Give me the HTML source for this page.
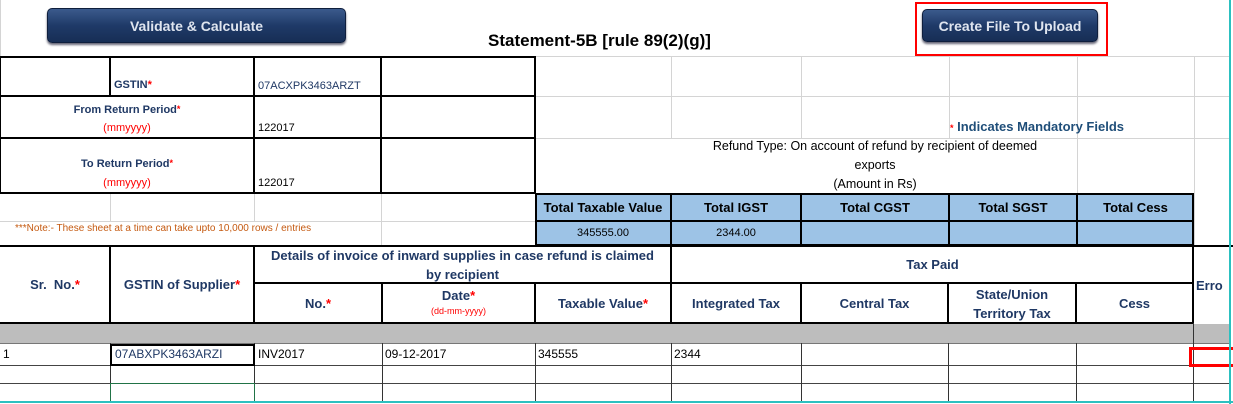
<!DOCTYPE html>
<html><head><meta charset="utf-8"><style>
*{margin:0;padding:0;box-sizing:border-box}
body{width:1233px;height:404px;background:#fff;position:relative;overflow:hidden;font-family:"Liberation Sans Narrow","Liberation Sans",sans-serif;}
.a{position:absolute}
.h{position:absolute;height:0}
.v{position:absolute;width:0}
.t{position:absolute;display:flex;align-items:center;justify-content:center;text-align:center;line-height:1.25}
.n{color:#1f3864;font-weight:bold;font-size:13px}
.r{color:#f00}
.btn{position:absolute;border-radius:5px;background:linear-gradient(#3b5a8c,#1f3a68 50%,#172e55);border:1px solid #0f1f3d;color:#dfe5ef;font-family:"Liberation Sans",sans-serif;font-weight:bold;font-size:14px;display:flex;align-items:center;justify-content:center;box-shadow:0 2px 2px #667;}
.blue{background:#9dc3e6}
.d{font-size:12px;color:#000;position:absolute;}
</style></head><body>
<div class="h" style="left:535px;width:695px;top:56px;border-top:1px solid #d4d4d4"></div>
<div class="h" style="left:535px;width:695px;top:96px;border-top:1px solid #d4d4d4"></div>
<div class="h" style="left:535px;width:695px;top:138px;border-top:1px solid #d4d4d4"></div>
<div class="v" style="left:671px;top:56px;height:82px;border-left:1px solid #d4d4d4"></div>
<div class="v" style="left:801px;top:56px;height:82px;border-left:1px solid #d4d4d4"></div>
<div class="v" style="left:949px;top:56px;height:82px;border-left:1px solid #d4d4d4"></div>
<div class="v" style="left:1077px;top:56px;height:137px;border-left:1px solid #d4d4d4"></div>
<div class="v" style="left:1194px;top:56px;height:190px;border-left:1px solid #d4d4d4"></div>
<div class="h" style="left:0;width:535px;top:221px;border-top:1px solid #d4d4d4"></div>
<div class="v" style="left:110px;top:193px;height:28px;border-left:1px solid #d4d4d4"></div>
<div class="v" style="left:254px;top:193px;height:28px;border-left:1px solid #d4d4d4"></div>
<div class="v" style="left:381px;top:193px;height:53px;border-left:1px solid #d4d4d4"></div>
<div class="v" style="left:0;top:0;height:56px;border-left:1px solid #d4d4d4"></div>
<div class="h" style="left:0;width:535px;top:56px;border-top:1px solid #bbb"></div>

<div class="a" style="left:0;top:56px;width:536px;height:138px;border:2px solid #000;border-left:1px solid #000"></div>
<div class="h" style="left:0;width:535px;top:95px;border-top:2px solid #000"></div>
<div class="h" style="left:0;width:535px;top:137px;border-top:2px solid #000"></div>
<div class="v" style="left:109px;top:56px;height:40px;border-left:2px solid #000"></div>
<div class="v" style="left:253px;top:56px;height:137px;border-left:2px solid #000"></div>
<div class="v" style="left:380px;top:56px;height:137px;border-left:2px solid #000"></div>

<div class="a blue" style="left:535px;top:193px;width:659px;height:53px;border:2px solid #000"></div>
<div class="h" style="left:535px;width:659px;top:220px;border-top:2px solid #000"></div>
<div class="v" style="left:670px;top:193px;height:53px;border-left:2px solid #000"></div>
<div class="v" style="left:800px;top:193px;height:53px;border-left:2px solid #000"></div>
<div class="v" style="left:948px;top:193px;height:53px;border-left:2px solid #000"></div>
<div class="v" style="left:1076px;top:193px;height:53px;border-left:2px solid #000"></div>

<div class="a" style="left:0;top:245px;width:1194px;height:79px;border-top:2px solid #000;border-bottom:2px solid #000;border-right:2px solid #000"></div>
<div class="h" style="left:1194px;width:40px;top:245px;border-top:2px solid #000"></div>
<div class="v" style="left:109px;top:245px;height:78px;border-left:2px solid #000"></div>
<div class="v" style="left:253px;top:245px;height:78px;border-left:2px solid #000"></div>
<div class="h" style="left:253px;width:941px;top:282px;border-top:2px solid #000"></div>
<div class="v" style="left:381px;top:283px;height:40px;border-left:2px solid #000"></div>
<div class="v" style="left:534px;top:283px;height:40px;border-left:2px solid #000"></div>
<div class="v" style="left:670px;top:245px;height:78px;border-left:2px solid #000"></div>
<div class="v" style="left:800px;top:283px;height:40px;border-left:2px solid #000"></div>
<div class="v" style="left:947px;top:283px;height:40px;border-left:2px solid #000"></div>
<div class="v" style="left:1075px;top:283px;height:40px;border-left:2px solid #000"></div>
<div class="a" style="left:0;top:324px;width:1230px;height:19px;background:#bdbdbd"></div>

<div class="h" style="left:0;width:1230px;top:343px;border-top:1px solid #777"></div>
<div class="h" style="left:0;width:1230px;top:365px;border-top:1px solid #444"></div>
<div class="h" style="left:0;width:1230px;top:383px;border-top:1px solid #444"></div>
<div class="v" style="left:110px;top:343px;height:60px;border-left:1px solid #333"></div>
<div class="v" style="left:254px;top:343px;height:60px;border-left:1px solid #333"></div>
<div class="v" style="left:382px;top:343px;height:60px;border-left:1px solid #333"></div>
<div class="v" style="left:535px;top:343px;height:60px;border-left:1px solid #333"></div>
<div class="v" style="left:671px;top:343px;height:60px;border-left:1px solid #333"></div>
<div class="v" style="left:801px;top:343px;height:60px;border-left:1px solid #333"></div>
<div class="v" style="left:948px;top:343px;height:60px;border-left:1px solid #333"></div>
<div class="v" style="left:1076px;top:343px;height:60px;border-left:1px solid #333"></div>
<div class="v" style="left:1193px;top:323px;height:80px;border-left:1px solid #333"></div>
<div class="a" style="left:110px;top:344px;width:145px;height:22px;border:2px solid #000"></div>
<div class="a" style="left:110px;top:383px;width:145px;height:20px;border:1px solid #217346;border-bottom:none"></div>
<div class="a" style="left:1189px;top:347px;width:44px;height:20px;border:3px solid #f00;border-right:none"></div>
<div class="v" style="left:1229px;top:0;height:404px;border-left:2px solid #2cc0c0"></div>
<div class="h" style="left:0;width:1233px;top:401px;border-top:2px solid #2cc0c0"></div>

<div class="btn" style="left:47px;top:8px;width:299px;height:35px">Validate &amp; Calculate</div>
<div class="a" style="left:915px;top:2px;width:193px;height:54px;border:2px solid #f00"></div>
<div class="btn" style="left:922px;top:9px;width:176px;height:33px">Create File To Upload</div>
<div class="a" style="left:488px;top:31px;font-family:'Liberation Sans',sans-serif;font-weight:bold;font-size:17px;color:#000">Statement-5B [rule 89(2)(g)]</div>

<div class="a n" style="left:114px;top:79px;font-size:11px">GSTIN<span class="r">*</span></div>
<div class="d" style="left:258px;top:80px;font-size:11px;color:#1f3864">07ACXPK3463ARZT</div>
<div class="a n" style="left:0;top:104px;width:254px;text-align:center;font-size:11px">From Return Period<span class="r" style="font-size:9px;vertical-align:top">*</span></div>
<div class="a r" style="left:0;top:122px;width:254px;text-align:center;font-size:11px">(mmyyyy)</div>
<div class="d" style="left:258px;top:122px;font-size:11px">122017</div>
<div class="a n" style="left:0;top:158px;width:254px;text-align:center;font-size:11px">To Return Period<span class="r" style="font-size:9px;vertical-align:top">*</span></div>
<div class="a r" style="left:0;top:177px;width:254px;text-align:center;font-size:11px">(mmyyyy)</div>
<div class="d" style="left:258px;top:177px;font-size:11px">122017</div>
<div class="a" style="left:15px;top:223px;font-size:10px;color:#c55a11">***Note:- These sheet at a time can take upto 10,000 rows / entries</div>

<div class="a" style="left:950px;top:119px;font-size:13px;color:#1f4e79;font-weight:bold"><span class="r" style="font-size:9px">*</span> Indicates Mandatory Fields</div>
<div class="t" style="left:670px;top:137px;width:410px;font-size:12.5px;color:#000;flex-direction:column;line-height:19px">Refund Type: On account of refund by recipient of deemed<br>exports<br>(Amount in Rs)</div>

<div class="t" style="left:535px;top:195px;width:136px;height:26px;font-weight:bold;font-size:13px">Total Taxable Value</div>
<div class="t" style="left:671px;top:195px;width:130px;height:26px;font-weight:bold;font-size:13px">Total IGST</div>
<div class="t" style="left:801px;top:195px;width:148px;height:26px;font-weight:bold;font-size:13px">Total CGST</div>
<div class="t" style="left:949px;top:195px;width:128px;height:26px;font-weight:bold;font-size:13px">Total SGST</div>
<div class="t" style="left:1077px;top:195px;width:117px;height:26px;font-weight:bold;font-size:13px">Total Cess</div>
<div class="t" style="left:535px;top:222px;width:136px;height:24px;font-size:11px">345555.00</div>
<div class="t" style="left:671px;top:222px;width:130px;height:24px;font-size:11px">2344.00</div>

<div class="t n" style="left:0;top:247px;width:110px;height:76px">Sr.&nbsp; No.<span class="r">*</span></div>
<div class="t n" style="left:110px;top:247px;width:144px;height:76px">GSTIN of Supplier<span class="r">*</span></div>
<div class="t n" style="left:254px;top:246px;width:417px;height:37px;line-height:19px">Details of invoice of inward supplies in case refund is claimed<br>by recipient</div>
<div class="t n" style="left:671px;top:247px;width:523px;height:36px">Tax Paid</div>
<div class="t n" style="left:254px;top:284px;width:128px;height:40px">No.<span class="r">*</span></div>
<div class="a n" style="left:382px;top:288px;width:153px;text-align:center">Date<span class="r">*</span></div>
<div class="a r" style="left:382px;top:306px;width:153px;text-align:center;font-size:9px">(dd-mm-yyyy)</div>
<div class="t n" style="left:535px;top:284px;width:136px;height:40px">Taxable Value<span class="r">*</span></div>
<div class="t n" style="left:671px;top:284px;width:130px;height:40px">Integrated Tax</div>
<div class="t n" style="left:801px;top:284px;width:147px;height:40px">Central Tax</div>
<div class="t n" style="left:948px;top:284px;width:128px;height:40px;line-height:19px">State/Union<br>Territory Tax</div>
<div class="t n" style="left:1076px;top:284px;width:117px;height:40px">Cess</div>
<div class="a n" style="left:1196px;top:278px">Erro</div>

<div class="d" style="left:3px;top:347px">1</div>
<div class="d" style="left:115px;top:347px;color:#1f3864">07ABXPK3463ARZI</div>
<div class="d" style="left:258px;top:347px">INV2017</div>
<div class="d" style="left:385px;top:347px">09-12-2017</div>
<div class="d" style="left:538px;top:347px">345555</div>
<div class="d" style="left:674px;top:347px">2344</div>
</body></html>
